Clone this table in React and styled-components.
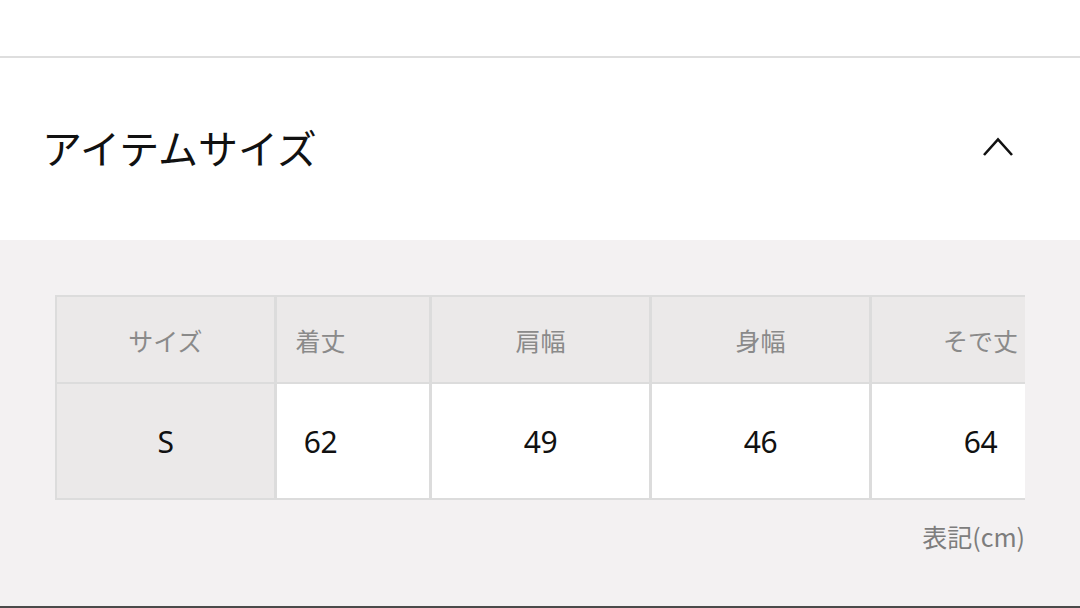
import { useLayoutEffect, useRef } from "react";
import styled, { createGlobalStyle } from "styled-components";

const GlobalStyle = createGlobalStyle`
  html, body {
    margin: 0;
    padding: 0;
    background: #f3f1f2;
  }
  body {
    font-family: "Noto Sans CJK JP", "Noto Sans", sans-serif;
    color: #111;
  }
`;

const sizeRows = [{ size: "S", values: ["62", "49", "46", "64"] }];
const headers = ["着丈", "肩幅", "身幅", "そで丈"];

const App = () => {
  const scrollRef = useRef(null);

  useLayoutEffect(() => {
    if (scrollRef.current) scrollRef.current.scrollLeft = 65;
  }, []);

  return (
    <Page>
      <GlobalStyle />
      <TopBar />
      <AccordionHeader>
        <Title>アイテムサイズ</Title>
        <Chevron viewBox="0 0 32 20" aria-hidden="true">
          <polyline points="2,18 16,2.5 30,18" />
        </Chevron>
      </AccordionHeader>

      <AccordionBody>
        <TableScroll ref={scrollRef}>
          <SizeGrid>
            <Cell $head $sticky>
              サイズ
            </Cell>
            {headers.map((h) => (
              <Cell key={h} $head>
                {h}
              </Cell>
            ))}
            {sizeRows.map((r) => [
              <Cell key={r.size} $sticky $body>
                {r.size}
              </Cell>,
              ...r.values.map((v, i) => (
                <Cell key={r.size + i} $body>
                  {v}
                </Cell>
              )),
            ])}
          </SizeGrid>
        </TableScroll>
        <Note>表記(cm)</Note>
      </AccordionBody>
      <BottomEdge />
    </Page>
  );
};

const Page = styled.div`
  display: flex;
  flex-direction: column;
  width: 1080px;
  height: 608px;
  overflow: hidden;
  background: #f3f1f2;
`;

const TopBar = styled.div`
  height: 56px;
  background: #fff;
  border-bottom: 2px solid #dedede;
`;

const AccordionHeader = styled.div`
  height: 182px;
  box-sizing: border-box;
  background: #fff;
  display: flex;
  align-items: center;
  justify-content: space-between;
  padding: 0 66px 4px 42px;
`;

const Title = styled.h2`
  margin: 0;
  font-size: 40px;
  font-weight: 400;
  letter-spacing: 0;
  color: #111;
  line-height: 1;
`;

const Chevron = styled.svg`
  width: 32px;
  height: 20px;
  fill: none;
  stroke: #111;
  stroke-width: 2.6;
  stroke-linejoin: miter;
`;

const AccordionBody = styled.div`
  flex: 1;
  padding: 55px 55px 0 55px;
  display: flex;
  flex-direction: column;
`;

const TableScroll = styled.div`
  width: 970px;
  box-sizing: border-box;
  overflow-x: auto;
  border: 2px solid #dcdcdc;
  border-right: none;
  scrollbar-width: none;
  &::-webkit-scrollbar {
    display: none;
  }
`;

const SizeGrid = styled.div`
  display: grid;
  grid-template-columns: repeat(5, 220px);
  grid-template-rows: 87px 114px;
  width: max-content;
`;

const Cell = styled.div`
  box-sizing: border-box;
  display: flex;
  align-items: center;
  justify-content: center;
  border-right: 3px solid #dcdcdc;
  border-bottom: ${(p) => (p.$head ? "2px solid #dcdcdc" : "none")};
  background: ${(p) => (p.$head || p.$sticky ? "#ebe9e9" : "#fff")};
  color: ${(p) => (p.$head ? "#8a8a8a" : "#111")};
  font-size: ${(p) => (p.$head ? "25px" : "30px")};
  font-family: ${(p) =>
    p.$body
      ? '"Noto Sans", "Noto Sans CJK JP", sans-serif'
      : '"Noto Sans CJK JP", "Noto Sans", sans-serif'};
  letter-spacing: ${(p) => (p.$body ? "-0.5px" : "0")};
  position: ${(p) => (p.$sticky ? "sticky" : "static")};
  left: 0;
  z-index: ${(p) => (p.$sticky ? 1 : "auto")};
`;

const Note = styled.div`
  width: 970px;
  text-align: right;
  margin-top: 18px;
  font-size: 25px;
  color: #7d7d7d;
`;

const BottomEdge = styled.div`
  height: 2px;
  background: #4a4a4a;
  flex-shrink: 0;
`;

export default App;
